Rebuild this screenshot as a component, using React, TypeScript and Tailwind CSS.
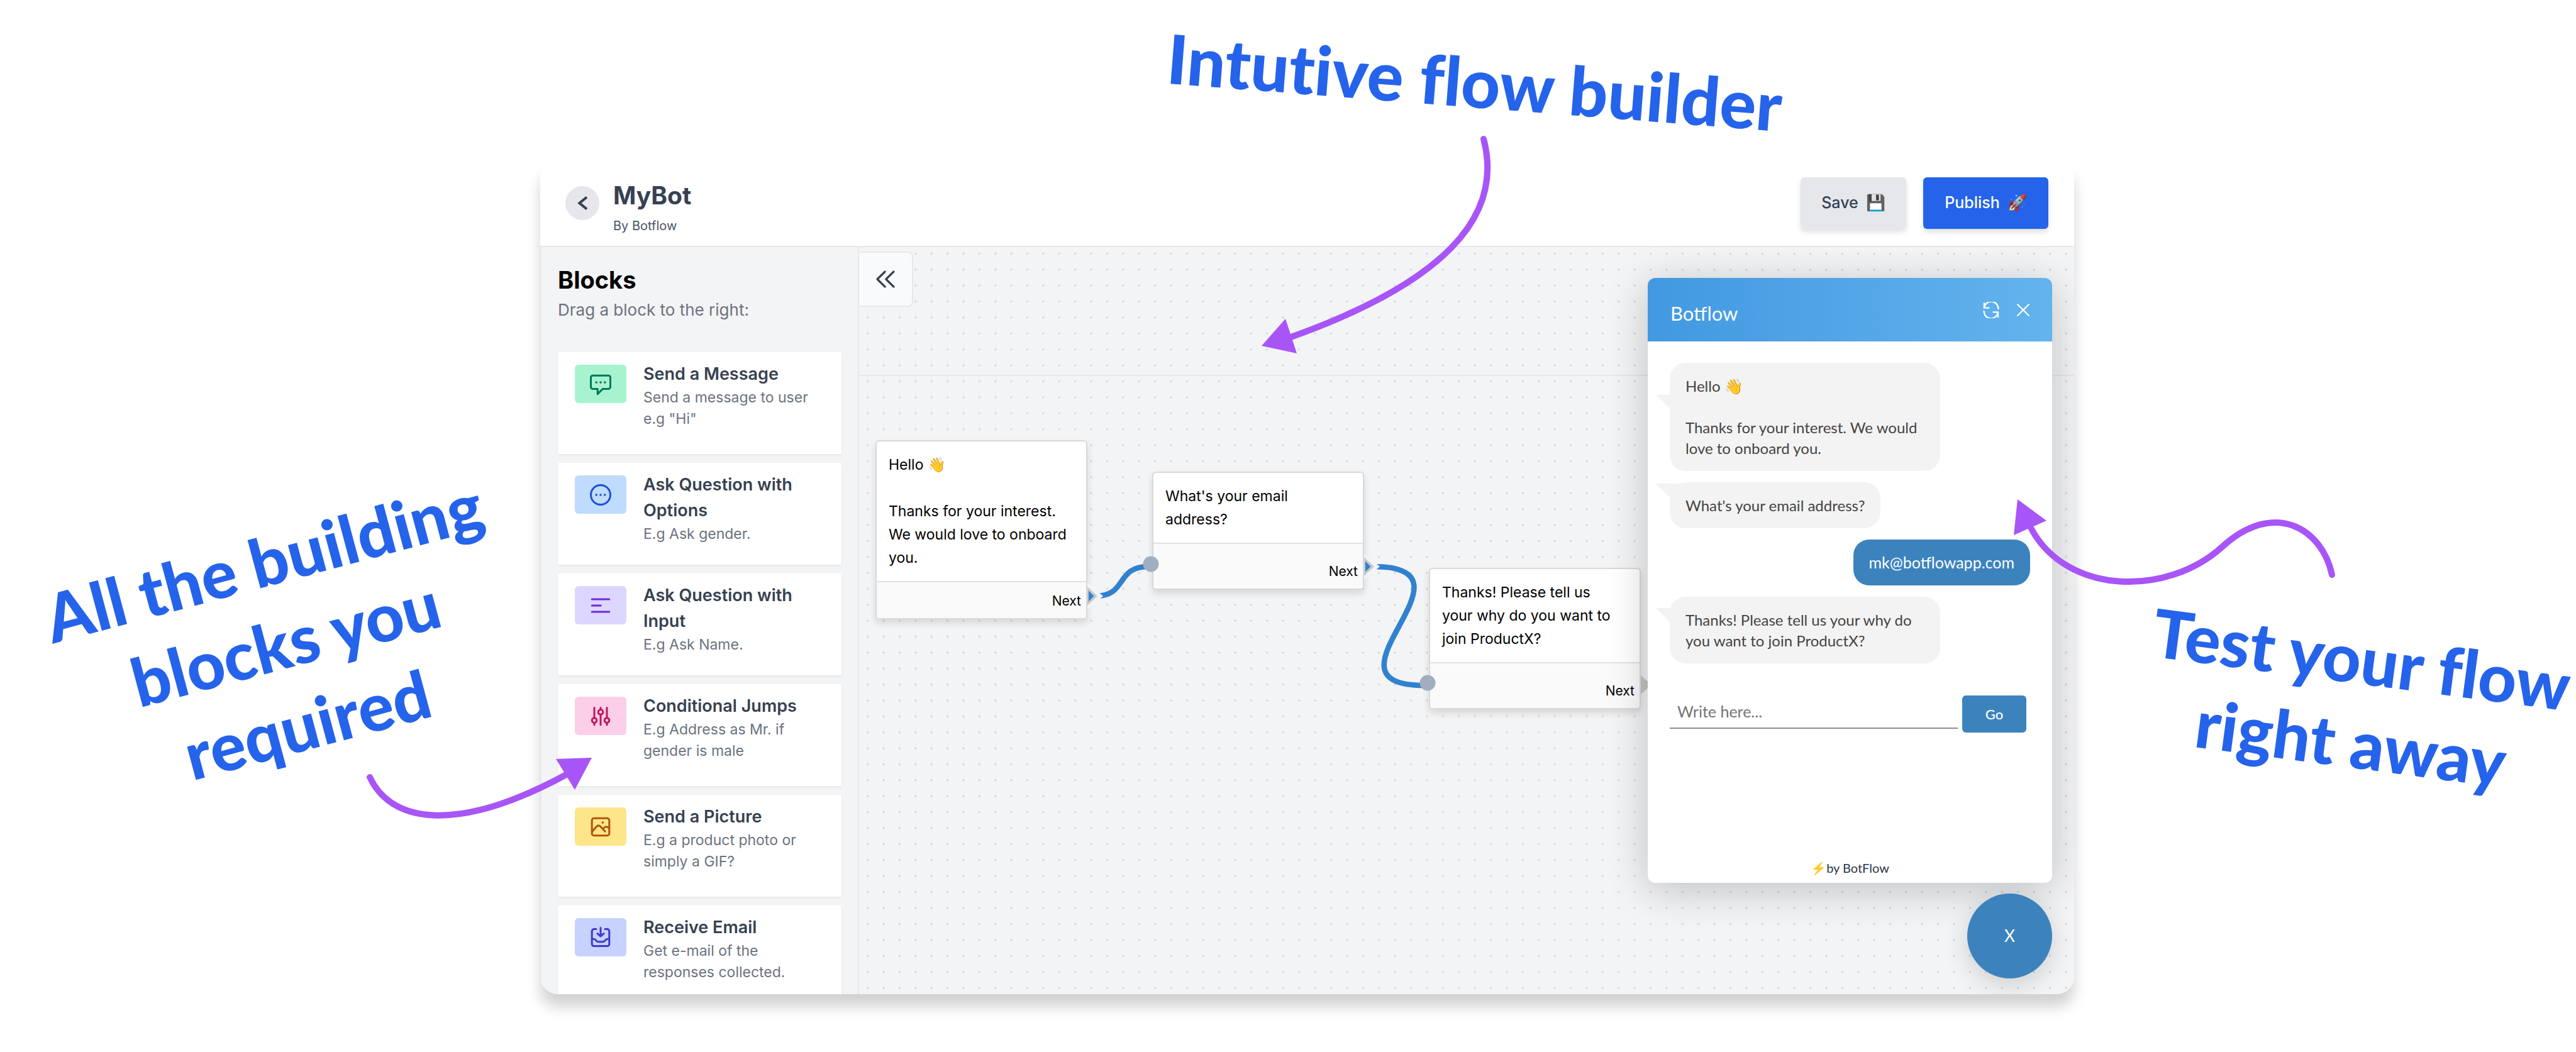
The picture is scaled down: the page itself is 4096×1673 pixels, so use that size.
import React from 'react';

const WAVE = '\u{1F44B}';

type Block = {
  title: string;
  text: string;
  tile: string;
  icon: React.ReactNode;
};

const dots = (
  <g fill="currentColor" stroke="none">
    <circle cx="-6.8" cy="0" r="1.8" />
    <circle cx="0" cy="0" r="1.8" />
    <circle cx="6.8" cy="0" r="1.8" />
  </g>
);

const blocks: Block[] = [
  {
    title: 'Send a Message',
    text: 'Send a message to user e.g "Hi"',
    tile: 'bg-[#a7f3d0] text-[#047857]',
    icon: (
      <>
        <path d="M-12.5-13.7H12.5a3 3 0 0 1 3 3V4.4a3 3 0 0 1-3 3H3.5L-4.8 15.6V7.4H-12.5a3 3 0 0 1-3-3V-10.7a3 3 0 0 1 3-3Z" />
        <g transform="translate(0 -2.9)">{dots}</g>
      </>
    ),
  },
  {
    title: 'Ask Question with Options',
    text: 'E.g Ask gender.',
    tile: 'bg-[#bfdbfe] text-[#1d4ed8]',
    icon: (
      <>
        <circle cx="0" cy="0" r="15.5" />
        {dots}
      </>
    ),
  },
  {
    title: 'Ask Question with Input',
    text: 'E.g Ask Name.',
    tile: 'bg-[#ddd6fe] text-[#6d28d9]',
    icon: <path d="M-13.8-10H13.8M-13.8 0H.2M-13.8 10H13.8" />,
  },
  {
    title: 'Conditional Jumps',
    text: 'E.g Address as Mr. if gender is male',
    tile: 'bg-[#fbcfe8] text-[#be185d]',
    icon: (
      <>
        <circle cx="-10" cy="6.6" r="3.8" />
        <circle cx="0" cy="-6.6" r="3.8" />
        <circle cx="10" cy="6.6" r="3.8" />
        <path d="M-10-13.6V2.8M-10 10.4v3.4M0-13.6v3.2M0-2.8v16.6M10-13.6V2.8M10 10.4v3.4" />
      </>
    ),
  },
  {
    title: 'Send a Picture',
    text: 'E.g a product photo or simply a GIF?',
    tile: 'bg-[#fde68a] text-[#b45309]',
    icon: (
      <>
        <rect x="-13.8" y="-13.8" width="27.6" height="27.6" rx="3.4" />
        <path d="M-13.4 7.4L-6.4-.6Q-3.4-3.6-.4-.8L7.2 7.2M4 3.4C6.4-.6 9.6-1.6 13.4 2" />
        <circle cx="3.4" cy="-6.9" r="1.8" fill="currentColor" stroke="none" />
      </>
    ),
  },
  {
    title: 'Receive Email',
    text: 'Get e-mail of the responses collected.',
    tile: 'bg-[#c7d2fe] text-[#4338ca]',
    icon: (
      <>
        <path d="M-7-13.4h-3.4a3.4 3.4 0 0 0-3.4 3.4V10.2a3.4 3.4 0 0 0 3.4 3.4H10.4a3.4 3.4 0 0 0 3.4-3.4V-10a3.4 3.4 0 0 0-3.4-3.4H7" />
        <path d="M0-15.4V-2M-5-6.4L0-1.8 5-6.4" />
        <path d="M-13.6 2.2h2.4c2 0 2.8.8 4 2.4 1.2 1.6 2 2.2 4 2.2h6.4c2 0 2.8-.6 4-2.2 1.2-1.6 2-2.4 4-2.4h2.4" />
      </>
    ),
  },
];

function BlockCard({ title, text, tile, icon }: Block) {
  return (
    <li className="flex h-[162px] shrink-0 items-start gap-[27px] bg-white px-[27px] shadow-[0_2px_4px_rgba(0,0,0,0.06)]">
      <span className={`mt-5 flex h-[61px] w-[82px] shrink-0 items-center justify-center rounded-md ${tile}`}>
        <svg viewBox="-18 -18 36 36" className="size-9" fill="none" stroke="currentColor" strokeWidth="3" strokeLinecap="round" strokeLinejoin="round" aria-hidden="true">
          {icon}
        </svg>
      </span>
      <div className="pt-3.5">
        <h3 className="text-[27px] leading-[41px] font-semibold text-[#374151]">{title}</h3>
        <p className="text-[23px] leading-[34px] text-[#6b7280]">{text}</p>
      </div>
    </li>
  );
}

function Sidebar() {
  return (
    <aside className="flex w-[507px] shrink-0 flex-col border-x-2 border-[#e5e7eb] bg-[#f3f4f6] px-[26px] pt-7">
      <h2 className="text-[38px] leading-[48px] font-bold text-black">Blocks</h2>
      <p className="mt-1.5 text-[26px] leading-9 text-[#6b7280]">Drag a block to the right:</p>
      <ul className="mt-[49px] flex flex-col gap-3.5">
        {blocks.map((b) => (
          <BlockCard key={b.title} {...b} />
        ))}
      </ul>
    </aside>
  );
}

type NodeProps = { place: string; foot: string; children: React.ReactNode };

function FlowNode({ place, foot, children }: NodeProps) {
  return (
    <article className={`absolute w-[337px] rounded-md border-2 border-[#d9d9d9] bg-white shadow-[0_6px_12px_rgba(0,0,0,0.12)] ${place}`}>
      <div className="pt-[19px] pr-4 pb-[18px] pl-[19px] text-[23px] leading-[37px] whitespace-pre-line text-black">{children}</div>
      <div className={`flex items-end justify-end rounded-b-md border-t-2 border-[#e2e2e2] bg-[#fafafa] pr-2 pb-3 ${foot}`}>
        <span className="text-[21px] leading-[30px] text-black">Next</span>
      </div>
    </article>
  );
}

function OutPort({ x, y }: { x: number; y: number }) {
  return (
    <g transform={`translate(${x} ${y})`}>
      <path d="M0-21L25 0 0 21Z" fill="#f3f4f6" />
      <path d="M0-15L16 0 0 15Z" fill="#c9c9c9" />
      <path d="M2-8.5L10.5 0 2 8.5Z" fill="#3182ce" />
    </g>
  );
}

function Edges() {
  return (
    <svg className="pointer-events-none absolute top-0 left-0 h-[1188px] w-[1932px]" viewBox="0 0 1932 1188" fill="none" aria-hidden="true">
      <g stroke="#3182ce" strokeWidth="8.6">
        <path d="M376 555C427 555 407 508 460 508" />
        <path d="M818 508C1001 508 717 697 898 697" />
      </g>
      <OutPort x={363} y={555} />
      <OutPort x={803} y={508} />
      <path d="M1243 681L1260 696 1243 711Z" fill="#c4c4c4" />
      <circle cx="464" cy="504" r="12.5" fill="#a0aec0" />
      <circle cx="904" cy="693" r="12.5" fill="#a0aec0" />
    </svg>
  );
}

function Bubble({ tail, children }: { tail: string; children: React.ReactNode }) {
  return (
    <div className="relative max-w-[430px] self-start rounded-[25px] bg-[#f3f3f3] px-[25px] py-5 text-[24px] leading-[33px] whitespace-pre-line text-[#444]">
      <svg viewBox="0 0 34 22" className={`absolute -left-[22px] h-[22px] w-[34px] ${tail}`} fill="#f3f3f3" aria-hidden="true">
        <path d="M0 0H34V22H22Z" />
      </svg>
      <span className="relative">{children}</span>
    </div>
  );
}

function ChatWidget() {
  return (
    <div className="absolute top-[49px] right-[35px] flex flex-col items-end gap-[17px] font-['Lato',sans-serif]">
      <section className="flex h-[962px] w-[643px] flex-col rounded-xl bg-white shadow-[0_10px_64px_rgba(0,0,0,0.22)]">
        <header className="flex h-[101px] items-center justify-between rounded-t-xl bg-gradient-to-r from-[#4299e1] to-[#63b3ed] pr-9 pl-9 text-white">
          <h2 className="pt-2.5 text-[31px] leading-10">Botflow</h2>
          <div className="flex items-center gap-7">
            <button type="button" aria-label="Restart chat">
              <svg viewBox="-13 -13 26 26" className="size-[26px]" fill="none" stroke="currentColor" strokeWidth="2.4" aria-hidden="true">
                <path d="M-11-12v8.6h8.4M-11-3.4A11 11 0 0 1 11.3-1M11 12V3.4H2.6M11 3.4A11 11 0 0 1-11.3 1" />
              </svg>
            </button>
            <button type="button" aria-label="Close chat">
              <svg viewBox="-10 -10 20 20" className="size-5" fill="none" stroke="currentColor" strokeWidth="2.2" strokeLinecap="round" aria-hidden="true">
                <path d="M-8.8-8.8L8.8 8.8M8.8-8.8L-8.8 8.8" />
              </svg>
            </button>
          </div>
        </header>
        <div className="flex flex-1 flex-col gap-[18px] px-[35px] pt-[34px]">
          <Bubble tail="top-[51px]">{`Hello ${WAVE}\n\nThanks for your interest. We would love to onboard you.`}</Bubble>
          <Bubble tail="top-[2px]">What's your email address?</Bubble>
          <div className="self-end rounded-[25px] bg-[#3c83be] px-[25px] py-5 text-[25px] leading-[33px] text-white">mk@botflowapp.com</div>
          <Bubble tail="top-[18px]">Thanks! Please tell us your why do you want to join ProductX?</Bubble>
          <form className="mt-[33px] flex items-end gap-[7px] pr-1.5">
            <input
              type="text"
              aria-label="Your answer"
              placeholder="Write here..."
              className="mb-1.5 h-[50px] min-w-0 flex-1 border-b-2 border-[#8f8f8f] bg-transparent px-3 pb-1 text-[25px] placeholder:text-[#757575] focus:outline-none"
            />
            <button type="button" className="h-[59px] w-[102px] rounded-md bg-[#3c83be] text-[22px] font-medium text-white">
              Go
            </button>
          </form>
        </div>
        <footer className="pb-2.5 text-center text-[20px] leading-7 text-[#2d3748]">
          <a href="#botflow">{'\u26A1'}by BotFlow</a>
        </footer>
      </section>
      <button type="button" aria-label="Toggle chat" className="size-[135px] rounded-full bg-[#3c83be] text-[26px] text-white shadow-[0_10px_40px_rgba(0,0,0,0.16)]">
        X
      </button>
    </div>
  );
}

function Canvas() {
  return (
    <main className="relative flex-1 bg-[#f3f4f6]">
      <svg className="absolute inset-0 h-full w-full" aria-hidden="true">
        <defs>
          <pattern id="grid-dots" width="25.407" height="25.38" x="0.9" y="-2.3" patternUnits="userSpaceOnUse">
            <circle cx="12.7" cy="12.7" r="1.7" fill="#d3d5d9" />
          </pattern>
        </defs>
        <rect width="100%" height="100%" fill="url(#grid-dots)" />
      </svg>
      <div className="absolute inset-x-0 top-[203px] h-0.5 bg-[#e5e7eb]" />
      <FlowNode place="left-[26px] top-[307px]" foot="h-[59px]">{`Hello ${WAVE}\n\nThanks for your interest. We would love to onboard you.`}</FlowNode>
      <FlowNode place="left-[466px] top-[357px]" foot="h-[73px]">What's your email address?</FlowNode>
      <FlowNode place="left-[906px] top-[510px]" foot="h-[73px]">{'Thanks! Please tell us\nyour why do you want to\njoin ProductX?'}</FlowNode>
      <Edges />
      <button type="button" aria-label="Collapse blocks" className="absolute top-[7px] -left-0.5 flex size-[88px] items-center justify-center rounded-r-lg border-2 border-[#e5e7eb] bg-[#f9fafb] text-[#374151]">
        <svg viewBox="-15 -14 30 28" className="h-7 w-[30px]" fill="none" stroke="currentColor" strokeWidth="3.2" strokeLinecap="round" strokeLinejoin="round" aria-hidden="true">
          <path d="M-.8-12L-13 0-.8 12M13-12L.8 0 13 12" />
        </svg>
      </button>
      <ChatWidget />
    </main>
  );
}

function Builder() {
  return (
    <div className="flex min-h-0 flex-col overflow-hidden rounded-[28px] bg-white shadow-[0_20px_22px_rgba(0,0,0,0.18)]">
      <header className="flex h-[138px] shrink-0 items-center border-b-2 border-[#e5e7eb] pr-[41px] pl-10">
        <button type="button" aria-label="Back" className="flex size-[54px] items-center justify-center rounded-full bg-[#e5e7eb] text-[#374151]">
          <svg viewBox="-10 -12 20 24" className="h-6 w-5" fill="none" stroke="currentColor" strokeWidth="4.2" aria-hidden="true">
            <path d="M7-9.5L-4.5 0 7 9.5" />
          </svg>
        </button>
        <div className="ml-[22px] pt-3.5">
          <h1 className="text-[39px] leading-[48px] font-bold text-[#374151]">MyBot</h1>
          <p className="mt-2.5 text-[20px] leading-7 text-[#4b5563]">By Botflow</p>
        </div>
        <div className="ml-auto flex gap-[27px]">
          <button type="button" className="flex h-[82px] w-[168px] items-center justify-center gap-3 rounded-md bg-[#e5e7eb] text-[25px] font-medium text-[#374151] shadow-[0_5px_9px_rgba(0,0,0,0.12)]">
            Save <span>{'\u{1F4BE}'}</span>
          </button>
          <button type="button" className="flex h-[82px] w-[199px] items-center justify-center gap-3 rounded-md bg-[#2563eb] text-[25px] font-medium text-white shadow-[0_5px_9px_rgba(0,0,0,0.12)]">
            Publish <span>{'\u{1F680}'}</span>
          </button>
        </div>
      </header>
      <div className="flex min-h-0 flex-1">
        <Sidebar />
        <Canvas />
      </div>
    </div>
  );
}

const note = "whitespace-nowrap leading-[134px] font-black text-[#2563eb] text-center font-['Lato',sans-serif] [font-variant-ligatures:none]";

function Arrows() {
  return (
    <svg className="pointer-events-none absolute inset-x-0 top-0 w-full" viewBox="0 0 4096 1673" fill="none" aria-hidden="true">
      <g stroke="#a855f7" strokeWidth="10" strokeLinecap="round">
        <path d="M2359 221C2392 345 2295 450 2050 537" />
        <path d="M588 1236C620 1305 720 1330 902 1231" />
        <path d="M3708 914C3692 840 3616 794 3533 870C3444 950 3286 945 3230 841" />
      </g>
      <g fill="#a855f7">
        <path d="M2006 550L2044 507 2062 562Z" />
        <path d="M941 1205L884 1207 914 1256Z" />
        <path d="M3208 794L3254 828 3202 851Z" />
      </g>
    </svg>
  );
}

export default function App() {
  return (
    <div className="relative grid h-screen grid-cols-[minmax(0,859fr)_minmax(0,2439fr)_minmax(0,798fr)] grid-rows-[255px_minmax(0,1fr)] overflow-hidden bg-white pb-[92px] font-['Inter',sans-serif]">
      <div className="col-start-2 row-start-1 flex items-start justify-center pt-[62px] pl-[533px]">
        <p className={`rotate-[4.5deg] text-[108px] ${note}`}>Intutive flow builder</p>
      </div>
      <div className="col-start-1 row-start-2 flex items-start justify-center pt-[565px] pl-12">
        <p className={`-rotate-[15deg] text-[106px] ${note}`}>
          All the building
          <br />
          blocks you
          <br />
          required
        </p>
      </div>
      <div className="col-start-2 row-start-2 grid min-h-0">
        <Builder />
      </div>
      <div className="col-start-3 row-start-2 flex items-start justify-center pt-[724px] pl-[100px]">
        <p className={`rotate-[7.5deg] text-[106px] ${note}`}>
          Test your flow
          <br />
          right away
        </p>
      </div>
      <Arrows />
    </div>
  );
}
